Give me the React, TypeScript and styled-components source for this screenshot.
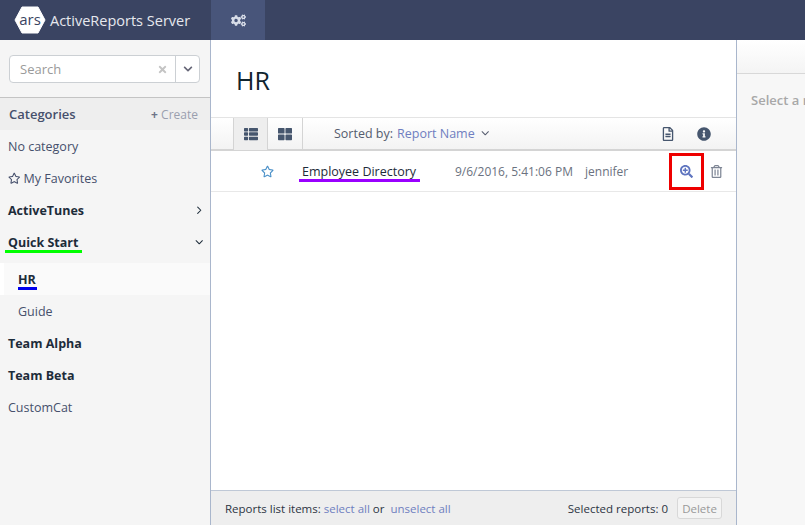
import React from 'react'
import styled, { createGlobalStyle } from 'styled-components'
import {
  FaChevronDown,
  FaCogs,
  FaInfoCircle,
  FaRegFileAlt,
  FaRegStar,
  FaRegTrashAlt,
  FaSearchPlus,
  FaThLarge,
  FaThList,
  FaTimes,
} from 'react-icons/fa'
import { LuChevronDown, LuChevronRight } from 'react-icons/lu'

const Global = createGlobalStyle`
  html, body { margin: 0; height: 100%; overflow: hidden; }
  #root { height: 100%; }
  body { font-family: "Open Sans", "Liberation Sans", sans-serif; font-size: 12px; color: #3a4462; }
  * { box-sizing: border-box; }
`

const Page = styled.div`
  width: 805px;
  height: 525px;
  display: flex;
  flex-direction: column;
  overflow: hidden;
  background: #fff;
`

const TopBar = styled.header`
  height: 40px;
  flex: none;
  display: flex;
  background: #3a4462;
`

const Brand = styled.div`
  width: 211px;
  display: flex;
  align-items: center;
  padding-left: 14px;
  gap: 4px;
  color: #e6e8ee;
  font-size: 14.5px;
`

const Tab = styled.div`
  width: 54px;
  display: flex;
  align-items: center;
  justify-content: center;
  background: #48557a;
  color: #d8dde8;
  font-size: 15px;
`

const Body = styled.div`
  flex: 1;
  display: flex;
  min-height: 0;
`

const Sidebar = styled.aside`
  width: 210px;
  flex: none;
  background: #f5f5f5;
  display: flex;
  flex-direction: column;
`

const SearchArea = styled.div`
  height: 58px;
  padding: 15px 10px 0 9px;
  border-bottom: 1px solid #c4c4c4;
`

const SearchBox = styled.div`
  height: 28px;
  display: flex;
  align-items: center;
  background: #fff;
  border: 1px solid #ccd0d4;
  border-radius: 4px;
`

const SearchText = styled.span`
  flex: 1;
  padding-left: 10px;
  color: #9a9a9a;
  font-size: 13px;
`

const ClearIcon = styled.span`
  display: flex;
  margin-right: 7px;
  color: #c4c4c4;
  font-size: 11px;
`

const SearchDrop = styled.span`
  width: 24px;
  height: 100%;
  display: flex;
  align-items: center;
  justify-content: center;
  border-left: 1px solid #ccd0d4;
  color: #667;
  font-size: 10px;
`

const CategoriesHead = styled.div`
  height: 32px;
  display: flex;
  align-items: center;
  justify-content: space-between;
  padding: 0 12px 0 9px;
  background: #eeeeee;
  font-size: 13px;
  font-weight: 600;
  color: #46506c;
`

const CreateLink = styled.span`
  font-size: 12px;
  font-weight: 400;
  color: #9a9fae;
`

const PlusSign = styled.b`
  color: #6d7488;
`

const NavItem = styled.div<{ $bold?: boolean; $sub?: boolean; $active?: boolean; $tall?: boolean }>`
  height: ${p => (p.$tall ? 37 : 32)}px;
  padding: ${p => (p.$tall ? '0 5px 5px' : '0 5px 0')} ${p => (p.$sub ? '18px' : '8px')};
  padding-right: 5px;
  display: flex;
  align-items: center;
  justify-content: space-between;
  font-size: 12.5px;
  font-weight: ${p => (p.$bold ? 700 : 400)};
  color: ${p => (p.$bold ? '#1d2c3a' : '#46506c')};
  background: ${p => (p.$active ? '#fafafa' : 'transparent')};
  border-left: ${p => (p.$active ? '4px solid #fff' : 'none')};
  padding-left: ${p => (p.$active ? '14px' : p.$sub ? '18px' : '8px')};
`

const NavLabel = styled.span`
  display: flex;
  align-items: center;
  gap: 3px;
`

const Marked = styled.span<{ $color: string; $pad: number }>`
  position: relative;
  &::after {
    content: '';
    position: absolute;
    left: -${p => p.$pad}px;
    right: -${p => p.$pad + 1}px;
    bottom: -2px;
    height: 3px;
    background: ${p => p.$color};
  }
`

const Main = styled.main`
  width: 527px;
  flex: none;
  display: flex;
  flex-direction: column;
  background: #fff;
  border-left: 1px solid #a9b6cc;
  border-right: 1px solid #a9b6cc;
`

const Title = styled.h1`
  height: 77px;
  margin: 0;
  flex: none;
  padding: 23px 0 0 25px;
  font-size: 25px;
  line-height: 34px;
  font-weight: 400;
  color: #10242e;
`

const Toolbar = styled.div`
  height: 34px;
  flex: none;
  display: flex;
  align-items: center;
  background: linear-gradient(#fff, #f3f3f3);
  border-top: 1px solid #e4e4e4;
  border-bottom: 2px solid #d4d4d4;
  padding-left: 22px;
  padding-right: 25px;
`

const ViewButton = styled.span<{ $active?: boolean }>`
  width: 35px;
  height: 32px;
  display: flex;
  align-items: center;
  justify-content: center;
  border-right: 1px solid #d4d4d4;
  border-left: ${p => (p.$active ? '1px solid #d4d4d4' : 'none')};
  background: ${p => (p.$active ? '#eeeeee' : 'transparent')};
  color: #46566e;
  font-size: 14px;
`

const SortLabel = styled.span`
  margin-left: 31px;
  font-size: 12.5px;
  color: #555c6e;
  display: flex;
  align-items: center;
  gap: 4px;
`

const LinkText = styled.span`
  color: #6f7ec0;
`

const ToolIcons = styled.span`
  margin-left: auto;
  display: flex;
  align-items: center;
  gap: 22px;
  color: #46566e;
  font-size: 14px;
`

const Row = styled.div`
  height: 41px;
  flex: none;
  display: flex;
  align-items: center;
  padding-left: 50px;
  border-bottom: 1px solid #e8e8e8;
  font-size: 12px;
  color: #6b7280;
`

const StarIcon = styled.span`
  display: flex;
  width: 41px;
  color: #4a90c8;
  font-size: 13px;
`

const ReportName = styled.span`
  width: 153px;
  font-size: 12.5px;
  color: #1d2c3a;
`

const DateCell = styled.span`
  width: 130px;
`

const UserCell = styled.span`
  width: 84px;
`

const ActionBox = styled.span`
  width: 35px;
  height: 37px;
  display: flex;
  align-items: center;
  justify-content: center;
  border: 3px solid #ee0000;
  color: #5e74bf;
  font-size: 13px;
`

const TrashIcon = styled.span`
  display: flex;
  margin-left: 6px;
  color: #7d8594;
  font-size: 13px;
`

const Spacer = styled.div`
  flex: 1;
`

const Footer = styled.footer`
  height: 35px;
  flex: none;
  display: flex;
  align-items: center;
  padding: 0 14px;
  background: #eeeeee;
  border-top: 1px solid #bfc8d6;
  font-size: 11.5px;
  color: #2c3442;
`

const FooterRight = styled.span`
  margin-left: auto;
  display: flex;
  align-items: center;
  gap: 9px;
`

const DeleteButton = styled.span`
  width: 45px;
  height: 22px;
  display: flex;
  align-items: center;
  justify-content: center;
  background: #f4f4f4;
  border: 1px solid #d8d8d8;
  border-radius: 3px;
  color: #999;
`

const Preview = styled.section`
  flex: 1;
  background: #f7f7f7;
  min-width: 0;
  overflow: hidden;
`

const PreviewHead = styled.div`
  height: 34px;
  background: linear-gradient(#fff, #f4f4f4);
  border-bottom: 1px solid #d8d8d8;
`

const PreviewText = styled.div`
  padding: 17px 0 0 14px;
  white-space: nowrap;
  font-size: 13px;
  font-weight: 600;
  color: #a8a8a8;
`

const Logo = () => (
  <svg width="32" height="28" viewBox="0 0 32 28">
    <polygon points="8,1 24,1 31,14 24,27 8,27 1,14" fill="#fff" stroke="#fff" strokeLinejoin="round" />
    <text x="16" y="19" textAnchor="middle" fontSize="15" fill="#3a4462" fontFamily="Open Sans">ars</text>
  </svg>
)

const categories = [
  { label: 'No category' },
  { label: 'My Favorites', star: true },
]

export default function App() {
  return (
    <Page>
      <Global />
      <TopBar>
        <Brand>
          <Logo />
          ActiveReports Server
        </Brand>
        <Tab><FaCogs /></Tab>
      </TopBar>
      <Body>
        <Sidebar>
          <SearchArea>
            <SearchBox>
              <SearchText>Search</SearchText>
              <ClearIcon><FaTimes /></ClearIcon>
              <SearchDrop><FaChevronDown /></SearchDrop>
            </SearchBox>
          </SearchArea>
          <CategoriesHead>
            Categories
            <CreateLink><PlusSign>+</PlusSign> Create</CreateLink>
          </CategoriesHead>
          {categories.map(c => (
            <NavItem key={c.label}>
              <NavLabel>{c.star && <FaRegStar />}{c.label}</NavLabel>
            </NavItem>
          ))}
          <NavItem $bold>
            ActiveTunes
            <LuChevronRight />
          </NavItem>
          <NavItem $bold $tall>
            <Marked $color="#00ff00" $pad={3}>Quick Start</Marked>
            <LuChevronDown />
          </NavItem>
          <NavItem $bold $sub $active>
            <Marked $color="#0000ee" $pad={0}>HR</Marked>
          </NavItem>
          <NavItem $sub>Guide</NavItem>
          <NavItem $bold>Team Alpha</NavItem>
          <NavItem $bold>Team Beta</NavItem>
          <NavItem>CustomCat</NavItem>
        </Sidebar>
        <Main>
          <Title>HR</Title>
          <Toolbar>
            <ViewButton $active><FaThList /></ViewButton>
            <ViewButton><FaThLarge /></ViewButton>
            <SortLabel>
              Sorted by: <LinkText>Report Name</LinkText>
              <LuChevronDown />
            </SortLabel>
            <ToolIcons>
              <FaRegFileAlt />
              <FaInfoCircle />
            </ToolIcons>
          </Toolbar>
          <Row>
            <StarIcon><FaRegStar /></StarIcon>
            <ReportName><Marked $color="#9900ff" $pad={3}>Employee Directory</Marked></ReportName>
            <DateCell>9/6/2016, 5:41:06 PM</DateCell>
            <UserCell>jennifer</UserCell>
            <ActionBox><FaSearchPlus /></ActionBox>
            <TrashIcon><FaRegTrashAlt /></TrashIcon>
          </Row>
          <Spacer />
          <Footer>
            Reports list items:&nbsp;<LinkText>select all</LinkText>&nbsp;or&nbsp;&nbsp;<LinkText>unselect all</LinkText>
            <FooterRight>
              Selected reports: 0
              <DeleteButton>Delete</DeleteButton>
            </FooterRight>
          </Footer>
        </Main>
        <Preview>
          <PreviewHead />
          <PreviewText>Select a report</PreviewText>
        </Preview>
      </Body>
    </Page>
  )
}
